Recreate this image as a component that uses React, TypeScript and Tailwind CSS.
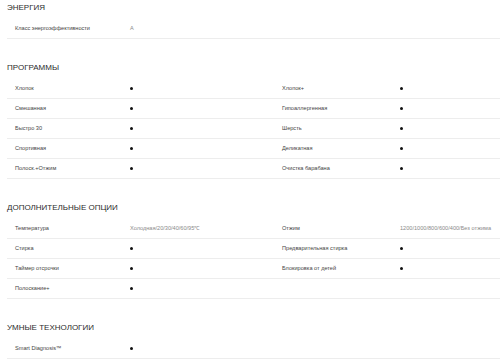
type Cell = string | true | null;
type Row = [string, Cell, string?, Cell?];

const sections: { title: string; rows: Row[] }[] = [
  { title: 'ЭНЕРГИЯ', rows: [['Класс энергоэффективности', 'A']] },
  {
    title: 'ПРОГРАММЫ',
    rows: [
      ['Хлопок', true, 'Хлопок+', true],
      ['Смешанная', true, 'Гипоаллергенная', true],
      ['Быстро 30', true, 'Шерсть', true],
      ['Спортивная', true, 'Деликатная', true],
      ['Полоск.+Отжим', true, 'Очистка барабана', true],
    ],
  },
  {
    title: 'ДОПОЛНИТЕЛЬНЫЕ ОПЦИИ',
    rows: [
      ['Температура', 'Холодная/20/30/40/60/95℃', 'Отжим', '1200/1000/800/600/400/Без отжима'],
      ['Стирка', true, 'Предварительная стирка', true],
      ['Таймер отсрочки', true, 'Блокировка от детей', true],
      ['Полоскание+', true],
    ],
  },
  { title: 'УМНЫЕ ТЕХНОЛОГИИ', rows: [['Smart Diagnosis™', true]] },
];

function Value({ v }: { v?: Cell }) {
  if (v === true) return <span className="block w-[3px] h-[3px] rounded-full bg-[#111]" />;
  if (!v) return null;
  return <span className="text-[#8a8a8a] whitespace-nowrap">{v}</span>;
}

export default function App() {
  return (
    <div className="w-[500px] h-[360px] overflow-hidden bg-white pl-[7px] font-['Liberation_Sans',Arial,sans-serif]">
      {sections.map((s, i) => (
        <section key={s.title} className={i > 0 ? 'mt-[21px]' : ''}>
          <h2 className="text-[8px] leading-[16px] text-[#2b2b2b] mb-[3px]">{s.title}</h2>
          {s.rows.map((r) => (
            <div
              key={r[0]}
              className="grid grid-cols-[115px_152px_118px_1fr] items-center h-[20px] border-b border-[#ededed] text-[5.6px] text-[#444]"
            >
              <span className="pl-2">{r[0]}</span>
              <span className="pl-2"><Value v={r[1]} /></span>
              <span className="pl-2">{r[2]}</span>
              <span className="pl-2"><Value v={r[3]} /></span>
            </div>
          ))}
        </section>
      ))}
    </div>
  );
}
